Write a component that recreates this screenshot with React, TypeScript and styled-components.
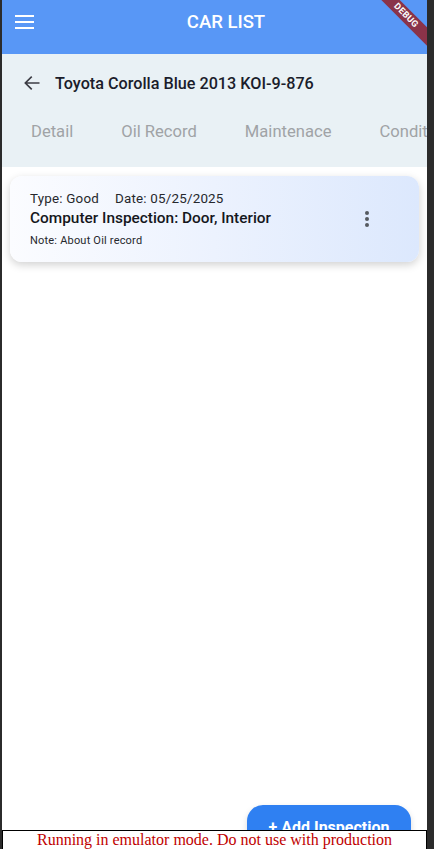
import styled, { createGlobalStyle } from "styled-components";

const GlobalStyle = createGlobalStyle`
  html, body {
    margin: 0;
    padding: 0;
    background: #2b2b2b;
  }
  * {
    box-sizing: border-box;
  }
`;

const tabs = ["Detail", "Oil Record", "Maintenace", "Condition"];

const Frame = styled.div`
  display: flex;
  width: 434px;
  height: 849px;
  background: #2b2b2b;
  position: relative;
  overflow: hidden;
`;

const Screen = styled.div`
  margin-left: 2px;
  width: 425px;
  height: 849px;
  background: #ffffff;
  display: flex;
  flex-direction: column;
  position: relative;
  overflow: hidden;
  font-family: Roboto, "Noto Sans", sans-serif;
`;

const AppBar = styled.header`
  height: 54px;
  background: #5897f6;
  display: flex;
  align-items: center;
  padding: 0 14px 10px 13px;
  position: relative;
`;

const MenuButton = styled.div`
  width: 19px;
  display: flex;
  flex-direction: column;
  gap: 4px;
  span {
    display: block;
    height: 2px;
    background: #ffffff;
  }
`;

const AppTitle = styled.h1`
  flex: 1;
  margin: 0 0 0 5px;
  text-align: center;
  color: #ffffff;
  font-size: 18.5px;
  font-weight: 500;
`;

const Ribbon = styled.div`
  position: absolute;
  top: 9px;
  right: -24px;
  width: 90px;
  height: 13px;
  background: #8a3349;
  color: #ffffff;
  font-size: 9px;
  font-weight: 700;
  line-height: 13px;
  text-align: center;
  letter-spacing: 0.3px;
  transform: rotate(45deg);
`;

const Header = styled.section`
  background: #e9f1f5;
  padding-bottom: 14px;
`;

const TitleRow = styled.div`
  height: 56px;
  display: flex;
  align-items: center;
  gap: 13px;
  padding-left: 20px;
  padding-top: 2px;
`;

const CarTitle = styled.h2`
  margin: 0;
  font-size: 16.2px;
  font-weight: 500;
  color: #1b1d2b;
`;

const TabRow = styled.nav`
  display: flex;
  gap: 48px;
  padding-left: 29px;
  height: 43px;
  align-items: center;
  white-space: nowrap;
  overflow: hidden;
`;

const Tab = styled.span`
  font-size: 16.6px;
  color: #a0a3a6;
  flex-shrink: 0;
`;

const Content = styled.main`
  flex: 1;
  padding: 9px 8px 0 8px;
`;

const Card = styled.article`
  display: flex;
  align-items: center;
  border-radius: 12px;
  background: linear-gradient(90deg, #fbfcff 0%, #ecf2fe 50%, #dce8fd 100%);
  box-shadow: 0 3px 8px rgba(0, 0, 0, 0.18);
  padding: 11px 40px 12px 20px;
  height: 86px;
`;

const CardBody = styled.div`
  flex: 1;
  display: flex;
  flex-direction: column;
`;

const Meta = styled.div`
  display: flex;
  gap: 16px;
  font-size: 13.4px;
  color: #26282d;
  letter-spacing: 0.2px;
`;

const CardTitle = styled.div`
  margin-top: 3px;
  font-size: 15.4px;
  font-weight: 500;
  color: #15171c;
`;

const Note = styled.div`
  margin-top: 7px;
  font-size: 11px;
  color: #26282d;
  letter-spacing: 0.2px;
`;

const Fab = styled.button`
  position: absolute;
  left: 245px;
  top: 805px;
  width: 164px;
  height: 56px;
  border: none;
  border-radius: 16px;
  background: #2f80f2;
  color: #ffffff;
  font-family: Roboto, sans-serif;
  font-size: 16px;
  font-weight: 700;
  padding-top: 13px;
  display: flex;
  justify-content: center;
  align-items: flex-start;
  box-shadow: 0 3px 6px rgba(0, 0, 0, 0.15);
`;

const EmulatorBanner = styled.div`
  position: absolute;
  left: 2px;
  top: 830px;
  width: 425px;
  height: 30px;
  background: #ffffff;
  border: 1px solid #000000;
  color: #c00000;
  font-family: "Liberation Serif", serif;
  font-size: 16px;
  line-height: 18px;
  text-align: center;
`;

const BackArrow = () => (
  <svg width="20" height="20" viewBox="0 0 24 24" fill="none">
    <path
      d="M20 12H5M11 5l-7 7 7 7"
      stroke="#3c3c44"
      strokeWidth="2"
      strokeLinecap="square"
    />
  </svg>
);

const MoreIcon = () => (
  <svg width="24" height="24" viewBox="0 0 24 24" fill="#555a60">
    <circle cx="12" cy="6" r="2" />
    <circle cx="12" cy="12" r="2" />
    <circle cx="12" cy="18" r="2" />
  </svg>
);

export default function App() {
  return (
    <>
      <GlobalStyle />
      <Frame>
        <Screen>
          <AppBar>
            <MenuButton>
              <span />
              <span />
              <span />
            </MenuButton>
            <AppTitle>CAR LIST</AppTitle>
            <Ribbon>DEBUG</Ribbon>
          </AppBar>
          <Header>
            <TitleRow>
              <BackArrow />
              <CarTitle>Toyota Corolla Blue 2013 KOI-9-876</CarTitle>
            </TitleRow>
            <TabRow>
              {tabs.map((t) => (
                <Tab key={t}>{t}</Tab>
              ))}
            </TabRow>
          </Header>
          <Content>
            <Card>
              <CardBody>
                <Meta>
                  <span>Type: Good</span>
                  <span>Date: 05/25/2025</span>
                </Meta>
                <CardTitle>Computer Inspection: Door, Interior</CardTitle>
                <Note>Note: About Oil record</Note>
              </CardBody>
              <MoreIcon />
            </Card>
          </Content>
          <Fab>+ Add Inspection</Fab>
        </Screen>
        <EmulatorBanner>Running in emulator mode. Do not use with production</EmulatorBanner>
      </Frame>
    </>
  );
}
